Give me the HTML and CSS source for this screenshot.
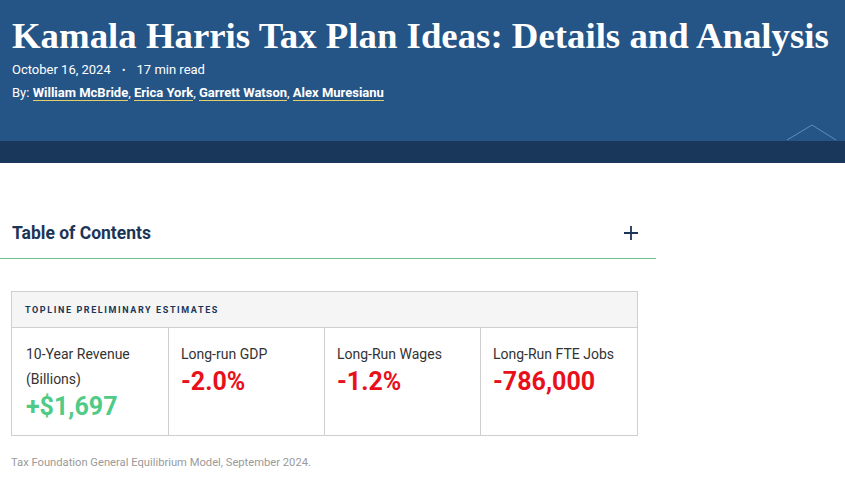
FILE: index.html
```html
<!DOCTYPE html>
<html lang="en">
<head>
<meta charset="utf-8">
<title>Kamala Harris Tax Plan Ideas</title>
<link rel="stylesheet" href="styles.css">
</head>
<body>
<header class="hero">
  <div class="hero-inner">
    <h1 class="title">Kamala Harris Tax Plan Ideas: Details and Analysis</h1>
    <div class="meta">October 16, 2024 <span class="dot">•</span> 17 min read</div>
    <div class="byline">By: <a href="#">William McBride</a>, <a href="#">Erica York</a>, <a href="#">Garrett Watson</a>, <a href="#">Alex Muresianu</a></div>
  </div>
  <svg class="peak" width="50" height="17" viewBox="0 0 50 17"><polyline points="0,16 25,1 49,16" fill="none" stroke="#5f8cc0" stroke-width="1"/></svg>
</header>
<div class="band"></div>
<main class="content">
  <div class="toc">
    <span class="toc-title">Table of Contents</span>
    <svg class="plus" width="14" height="14" viewBox="0 0 14 14"><path d="M7 0v14M0 7h14" stroke="#1b3556" stroke-width="1.8"/></svg>
  </div>
  <section class="estimates">
    <div class="est-head">TOPLINE PRELIMINARY ESTIMATES</div>
    <div class="est-grid">
      <div class="cell"><div class="label">10-Year Revenue (Billions)</div><div class="value pos">+$1,697</div></div>
      <div class="cell"><div class="label">Long-run GDP</div><div class="value neg">-2.0%</div></div>
      <div class="cell"><div class="label">Long-Run Wages</div><div class="value neg">-1.2%</div></div>
      <div class="cell"><div class="label">Long-Run FTE Jobs</div><div class="value neg">-786,000</div></div>
    </div>
  </section>
  <p class="source">Tax Foundation General Equilibrium Model, September 2024.</p>
</main>
</body>
</html>
```
FILE: styles.css
```css
* { box-sizing: border-box; }
body { margin: 0; background: #fff; font-family: Roboto, "Liberation Sans", Arial, sans-serif; }
.hero { position: relative; background: #255486; height: 141px; }
.hero-inner { padding: 14px 12px 0 12px; }
.title { margin: 0; font-family: "Liberation Serif", "Times New Roman", serif; font-weight: 700; font-size: 36.8px; line-height: 44px; color: #fff; white-space: nowrap; }
.meta { margin-top: 3px; font-size: 13px; line-height: 18px; color: #fff; }
.dot { margin: 0 8px; font-size: 10px; }
.byline { margin-top: 4px; font-size: 13px; line-height: 18px; color: #fff; }
.byline a { color: #fff; font-weight: 700; text-decoration: none; border-bottom: 1px solid #e2cf66; }
.peak { position: absolute; right: 8px; bottom: 0; }
.band { height: 22px; background: #18375a; }
.content { width: 656px; }
.toc { display: flex; justify-content: space-between; align-items: center; padding: 59px 18px 14px 12px; border-bottom: 1px solid #6cc28c; }
.toc-title { font-size: 17.5px; font-weight: 700; color: #1b3556; line-height: 22px; }
.estimates { margin: 32px 0 0 11px; width: 627px; border: 1px solid #cfcfcf; }
.est-head { background: #f5f5f5; border-bottom: 1px solid #cfcfcf; padding: 0 13px; height: 36px; line-height: 36px; font-size: 9px; font-weight: 700; letter-spacing: 1.6px; color: #1b3556; }
.est-grid { display: grid; grid-template-columns: 156px 156px 156px 157px; }
.cell { padding: 14px 12px 13px 12px; border-left: 1px solid #cfcfcf; }
.cell:first-child { border-left: none; padding-left: 14px; }
.label { font-size: 14px; line-height: 25px; color: #333; }
.value { font-size: 25px; font-weight: 700; line-height: 30px; }
.pos { color: #4fcb87; }
.neg { color: #e8101a; }
.source { margin: 20px 0 0 11px; font-size: 11.2px; color: #9a9a9a; }
```
